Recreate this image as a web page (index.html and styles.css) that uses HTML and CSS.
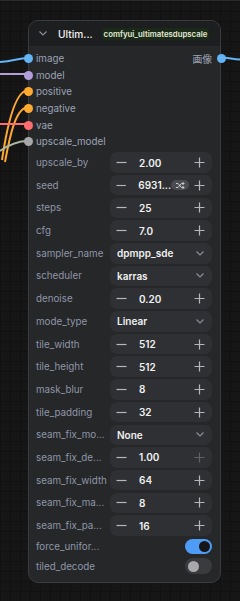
FILE: index.html
```html
<!DOCTYPE html>
<html lang="en">
<head>
    <meta charset="UTF-8">
    <meta name="viewport" content="width=device-width, initial-scale=1.0">
    <title>Ultimate SD Upscale</title>
    <link rel="stylesheet" href="styles.css">
</head>
<body>

    <div id="canvas">
        <!-- links going into / out of the node -->
        <svg class="wires" width="240" height="601" viewBox="0 0 240 601">
            <path d="M0,62 C14,61 18,58 28,58" stroke="#64b5f6" />
            <path d="M0,74 L28,74" stroke="#b39ddb" />
            <path d="M28,90.5 C16,90 8,120 2,160" stroke="#ffa931" />
            <path d="M28,107.5 C16,107 10,135 5,162" stroke="#ffa931" />
            <path d="M0,124 L28,124" stroke="#ff6e6e" />
            <path d="M28,141 C18,141 10,144 0,151" stroke="#a9b8a2" />
            <path d="M221,57.5 C228,57.5 232,59 240,59.5" stroke="#64b5f6" />
        </svg>

        <div class="node">
            <div class="node-header">
                <svg class="chevron" width="8" height="5" viewBox="0 0 8 5"><path d="M0.5,0.5 L4,4 L7.5,0.5" /></svg>
                <span class="node-title">Ultim...</span>
                <span class="node-badge">comfyui_ultimatesdupscale</span>
            </div>

            <div class="node-body">
                <div class="slot">
                    <span class="dot" style="background:#64b5f6"></span>
                    <span class="slot-name">image</span>
                    <span class="slot-out">画像</span>
                    <span class="dot dot-out" style="background:#64b5f6"></span>
                </div>
                <div class="slot"><span class="dot" style="background:#b39ddb"></span><span class="slot-name">model</span></div>
                <div class="slot"><span class="dot" style="background:#ffa931"></span><span class="slot-name">positive</span></div>
                <div class="slot"><span class="dot" style="background:#ffa931"></span><span class="slot-name">negative</span></div>
                <div class="slot"><span class="dot" style="background:#ff6e6e"></span><span class="slot-name">vae</span></div>
                <div class="slot"><span class="dot" style="background:#a8a8a8"></span><span class="slot-name">upscale_model</span></div>

                <div class="widgets" id="widgets"></div>
            </div>
        </div>
    </div>

    <script>
        var minus = '<svg class="step" width="11" height="11" viewBox="0 0 11 11"><path d="M0.5,5.5 H10.5" /></svg>';
        var plus = '<svg class="step" width="11" height="11" viewBox="0 0 11 11"><path d="M0.5,5.5 H10.5 M5.5,0.5 V10.5" /></svg>';
        var chevron = '<svg class="combo-arrow" width="8" height="5" viewBox="0 0 8 5"><path d="M0.5,0.5 L4,4 L7.5,0.5" /></svg>';
        var shuffle = '<span class="seed-pill"><svg width="9" height="7" viewBox="0 0 9 7"><path d="M0,1.5 H2 L5.5,5.5 H8 M0,5.5 H2 L5.5,1.5 H8 M6.5,0 L8,1.5 L6.5,3 M6.5,4 L8,5.5 L6.5,7" /></svg></span>';

        // labels are shortened the way the node draws them
        var widgets = [
            ['upscale_by', 'num', '2.00'],
            ['seed', 'num', '6931...', true],
            ['steps', 'num', '25'],
            ['cfg', 'num', '7.0'],
            ['sampler_name', 'combo', 'dpmpp_sde'],
            ['scheduler', 'combo', 'karras'],
            ['denoise', 'num', '0.20'],
            ['mode_type', 'combo', 'Linear'],
            ['tile_width', 'num', '512'],
            ['tile_height', 'num', '512'],
            ['mask_blur', 'num', '8'],
            ['tile_padding', 'num', '32'],
            ['seam_fix_mo...', 'combo', 'None'],
            ['seam_fix_de...', 'num', '1.00', false, true],
            ['seam_fix_width', 'num', '64'],
            ['seam_fix_ma...', 'num', '8'],
            ['seam_fix_pa...', 'num', '16'],
            ['force_unifor...', 'toggle', true],
            ['tiled_decode', 'toggle', false]
        ];

        var html = '';
        widgets.forEach(function (w) {
            var box;
            if (w[1] === 'num') {
                box = '<div class="box num">' + minus + '<span class="value">' + w[2] + '</span>' +
                    (w[3] ? shuffle : '') + '<span class="' + (w[4] ? 'dim' : '') + '">' + plus + '</span></div>';
            } else if (w[1] === 'combo') {
                box = '<div class="box combo"><span class="value">' + w[2] + '</span>' + chevron + '</div>';
            } else {
                box = '<div class="toggle' + (w[2] ? ' on' : '') + '"><span class="knob"></span></div>';
            }
            html += '<div class="widget ' + (w[1] === 'toggle' ? 'widget-toggle' : '') + '">' +
                '<span class="widget-label">' + w[0] + '</span>' + box + '</div>';
        });
        document.getElementById('widgets').innerHTML = html;
    </script>

</body>
</html>
```

FILE: styles.css
```css
body {
    margin: 0;
    padding: 0;
    font-family: Inter, "Noto Sans", "Noto Sans CJK JP", sans-serif;
    background-color: #151515;
    overflow: hidden;
}
#canvas {
    position: relative;
    width: 240px;
    height: 601px;
    border-top: 1px solid #2c2c2c;
    box-sizing: border-box;
    background-color: #161616;
    background-image:
        linear-gradient(to right, #111 1px, transparent 1px),
        linear-gradient(to bottom, #111 1px, transparent 1px);
    background-size: 10px 10px;
}
.wires {
    position: absolute;
    left: 0;
    top: -1px;
}
.wires path {
    fill: none;
    stroke-width: 2;
}
.node {
    position: absolute;
    left: 28px;
    top: 19px;
    width: 193px;
    height: 563px;
    box-sizing: border-box;
    background: #262729;
    border: 1px solid #3a3b3e;
    border-radius: 10px;
}
.node-header {
    height: 25px;
    display: flex;
    align-items: center;
    background: #1d1e20;
    border-radius: 9px 9px 0 0;
    padding-left: 10px;
}
.chevron path, .combo-arrow path {
    fill: none;
    stroke: #8b8f99;
    stroke-width: 1.1;
}
.node-title {
    margin-left: 11px;
    color: #f2f2f2;
    font-size: 10.2px;
    font-weight: 500;
}
.node-badge {
    margin-left: 9px;
    padding: 1px 2px;
    background: #1b2a18;
    color: #e4ebd8;
    font-size: 7.8px;
    font-weight: 600;
    border-radius: 2px;
    white-space: nowrap;
}
.node-body {
    padding-top: 4.5px;
}
.slot {
    position: relative;
    height: 16.6px;
    display: flex;
    align-items: center;
    font-size: 9.8px;
    color: #9ba3b5;
}
.dot {
    position: absolute;
    left: -5.5px;
    top: 3.8px;
    width: 9px;
    height: 9px;
    border-radius: 50%;
}
.dot-out {
    left: auto;
    right: -5.5px;
}
.slot-name {
    margin-left: 7px;
}
.slot-out {
    margin-left: auto;
    margin-right: 8px;
}
.widgets {
    padding: 0 8px 0 7px;
    margin-top: 0.5px;
}
.widget {
    display: flex;
    align-items: center;
    justify-content: space-between;
    height: 20.5px;
    margin-top: 2.2px;
}
.widget-toggle {
    height: 18.5px;
    margin-top: 1.3px;
}
.widget-label {
    font-size: 9.8px;
    color: #8e96a8;
    white-space: nowrap;
}
.box {
    width: 102px;
    height: 20.5px;
    box-sizing: border-box;
    background: #2f3033;
    border-radius: 7px;
    display: flex;
    align-items: center;
    color: #f0f0f0;
    font-size: 10px;
    font-weight: 600;
    flex-shrink: 0;
}
.num {
    padding: 0 7px 0 6px;
}
.num .value {
    margin-left: 12px;
    flex: 1;
    white-space: nowrap;
}
.step {
    display: block;
}
.step path {
    stroke: #b4b6bc;
    stroke-width: 1.2;
}
.dim .step path {
    stroke: #5e6066;
}
.seed-pill {
    display: flex;
    align-items: center;
    justify-content: center;
    width: 19px;
    height: 10px;
    border-radius: 5px;
    background: #4b4c51;
    margin-right: 5px;
}
.seed-pill path {
    fill: none;
    stroke: #d8d8da;
    stroke-width: 0.9;
}
.combo {
    padding: 0 8px 0 7px;
}
.combo .value {
    flex: 1;
}
.toggle {
    width: 27px;
    height: 15.5px;
    border-radius: 8px;
    background: #3a3b3e;
    display: flex;
    align-items: center;
    padding: 0 2.5px;
    box-sizing: border-box;
}
.toggle.on {
    background: #4f9cf7;
    justify-content: flex-end;
}
.knob {
    width: 11px;
    height: 11px;
    border-radius: 50%;
    background: #a9a9ad;
}
.toggle.on .knob {
    background: #161618;
}
```
